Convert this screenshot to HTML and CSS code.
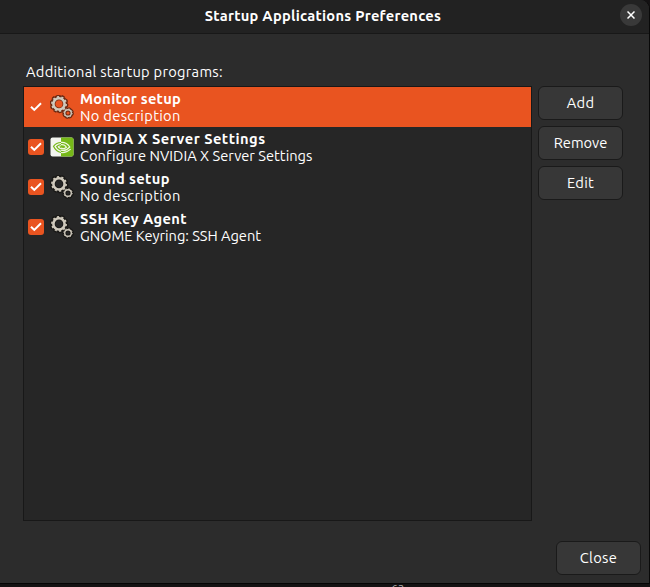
FILE: index.html
```
<!DOCTYPE html>
<html lang="en">
<head>
<meta charset="utf-8">
<title>Startup Applications Preferences</title>
<link rel="stylesheet" href="styles.css">
</head>
<body>
<svg width="0" height="0" class="defs" aria-hidden="true">
  <symbol id="check" viewBox="0 0 16 16"><path d="M3 7.7 6.3 10.9 13 4.2" fill="none" stroke="#fff" stroke-width="2"/></symbol>
  <symbol id="gears" viewBox="0 0 24 24">
    <g fill="none" stroke="var(--gear-edge)">
      <circle cx="9" cy="8.9" r="6.2" stroke-width="5.2"/>
      <circle cx="9" cy="8.9" r="7.6" stroke-width="3.6" stroke-dasharray="2.5 2.275"/>
      <circle cx="18" cy="18" r="3.6" stroke-width="4"/>
      <circle cx="18" cy="18" r="4.4" stroke-width="2.6" stroke-dasharray="1.9 1.556"/>
    </g>
    <g fill="none" stroke="#d0cabd">
      <circle cx="9" cy="8.9" r="5.6" stroke-width="2.6"/>
      <circle cx="9" cy="8.9" r="7.1" stroke-width="1.7" stroke-dasharray="2.1 2.361"/>
      <circle cx="18" cy="18" r="3.3" stroke-width="1.4"/>
      <circle cx="18" cy="18" r="4.2" stroke-width="1" stroke-dasharray="1.3 1.999"/>
    </g>
  </symbol>
</svg>
<div class="window">
  <header class="titlebar">
    <span></span>
    <h1>Startup Applications Preferences</h1>
    <button class="dismiss" aria-label="Close window"><svg width="8" height="8" viewBox="0 0 8 8"><path d="M.5.5 7.5 7.5M7.5.5.5 7.5" stroke="#fff" stroke-width="1.5"/></svg></button>
  </header>
  <main>
    <p class="label">Additional startup programs:</p>
    <div class="panel">
      <ul class="list">
        <li class="row selected">
          <svg class="check"><use href="#check"/></svg>
          <svg class="icon"><use href="#gears"/></svg>
          <div class="text"><b class="monitor">Monitor setup</b><span class="none">No description</span></div>
        </li>
        <li class="row">
          <svg class="check"><use href="#check"/></svg>
          <svg class="icon" viewBox="0 0 24 24">
            <rect x=".5" y="2.5" width="23" height="19" rx="2" fill="#f3f5f0"/>
            <path d="M11 2.5h10.5a2 2 0 0 1 2 2v15a2 2 0 0 1-2 2H11z" fill="#76b818"/>
            <path d="M11 7.5C7.7 7.6 5 9.3 3.5 11.3c1.5 3.2 4.2 5.7 7.5 6.2M11 9.6c-1.9.1-3.5 1-4.4 2 .9 1.9 2.4 3.2 4.4 3.5" fill="none" stroke="#76b818" stroke-width="1.2"/>
            <path d="M11 7.4c4.2-.3 7.2 2 8.8 4.6-1.8 2-5.1 4.2-8.8 3.1M11 9.6c2.8-.4 4.5 1 5.4 2.6-1.3 1.1-3.4 1.9-5.4.9M11 17.5c3.6.5 7.2-1.2 9.7-3.4" fill="none" stroke="#eef6df" stroke-width="1.2"/>
            <path d="M9.2 11.7 11 10.9v2.3z" fill="#76b818"/>
          </svg>
          <div class="text"><b class="nvidia">NVIDIA X Server Settings</b><span class="configure">Configure NVIDIA X Server Settings</span></div>
        </li>
        <li class="row">
          <svg class="check"><use href="#check"/></svg>
          <svg class="icon"><use href="#gears"/></svg>
          <div class="text"><b class="sound">Sound setup</b><span class="none">No description</span></div>
        </li>
        <li class="row">
          <svg class="check"><use href="#check"/></svg>
          <svg class="icon"><use href="#gears"/></svg>
          <div class="text"><b class="ssh">SSH Key Agent</b><span class="keyring">GNOME Keyring: SSH Agent</span></div>
        </li>
      </ul>
      <div class="actions">
        <button class="btn">Add</button>
        <button class="btn remove">Remove</button>
        <button class="btn">Edit</button>
      </div>
    </div>
    <footer><button class="btn">Close</button></footer>
  </main>
</div>
<div class="backdrop"><span>63</span></div>
</body>
</html>
```
FILE: styles.css
```
* { box-sizing: border-box; }
body {
  margin: 0;
  height: 587px;
  overflow: hidden;
  background: #141213;
  color: #fff;
  font: 14.67px/17px Ubuntu, "Noto Sans", sans-serif;
}
.defs { position: absolute; }
.window {
  width: 650px;
  height: 584px;
  background: #2c2c2c;
  border-right: 1px solid #080808;
  border-bottom: 1px solid #050505;
  border-top-right-radius: 9px;
  overflow: hidden;
}
.titlebar {
  display: grid;
  grid-template-columns: 1fr auto 1fr;
  align-items: center;
  height: 34px;
  padding: 0 7px 2px 4px;
  background: #222;
  border-bottom: 1px solid #181818;
}
h1 { margin: 0; padding-bottom: 1px; font-size: 14.67px; font-weight: 700; letter-spacing: .26px; }
.dismiss {
  display: grid;
  place-items: center;
  justify-self: end;
  width: 22px;
  height: 22px;
  margin-top: -1px;
  padding: 0;
  border: 0;
  border-radius: 50%;
  background: #393939;
}
main { padding: 28px 8px 0 23px; }
.label { margin: 0; padding-left: 3px; height: 24px; line-height: 20px; letter-spacing: .27px; }
.panel { display: flex; gap: 6px; height: 435px; }
.list {
  width: 509px;
  margin: 0;
  padding: 0;
  list-style: none;
  background: #262626;
  border: 1px solid #181818;
}
.row { --gear-edge: #191816; display: flex; align-items: center; height: 40px; padding-left: 4px; }
.selected { --gear-edge: #6b2912; background: #e95420; }
.check { width: 16px; height: 16px; border-radius: 3px; background: #e95420; }
.icon { width: 24px; height: 24px; margin: 0 6px; }
.text { display: flex; flex-direction: column; padding-bottom: 1px; white-space: nowrap; }
.monitor { letter-spacing: .23px; }
.nvidia { letter-spacing: .48px; }
.sound, .ssh { letter-spacing: .4px; }
.none { letter-spacing: .32px; }
.configure { letter-spacing: .01px; }
.keyring { letter-spacing: -.03px; }
.actions { display: flex; flex-direction: column; gap: 6px; }
.btn {
  width: 85px;
  height: 34px;
  padding: 0 0 2px;
  border: 1px solid #1a1a1a;
  border-radius: 6px;
  background: #373737;
  color: #fff;
  font: inherit;
  letter-spacing: .3px;
}
.remove { letter-spacing: 0; }
footer { display: flex; justify-content: flex-end; padding-top: 20px; }
.backdrop { height: 3px; overflow: hidden; padding-left: 391px; color: #aaa; font-size: 12px; line-height: 9px; }
```
